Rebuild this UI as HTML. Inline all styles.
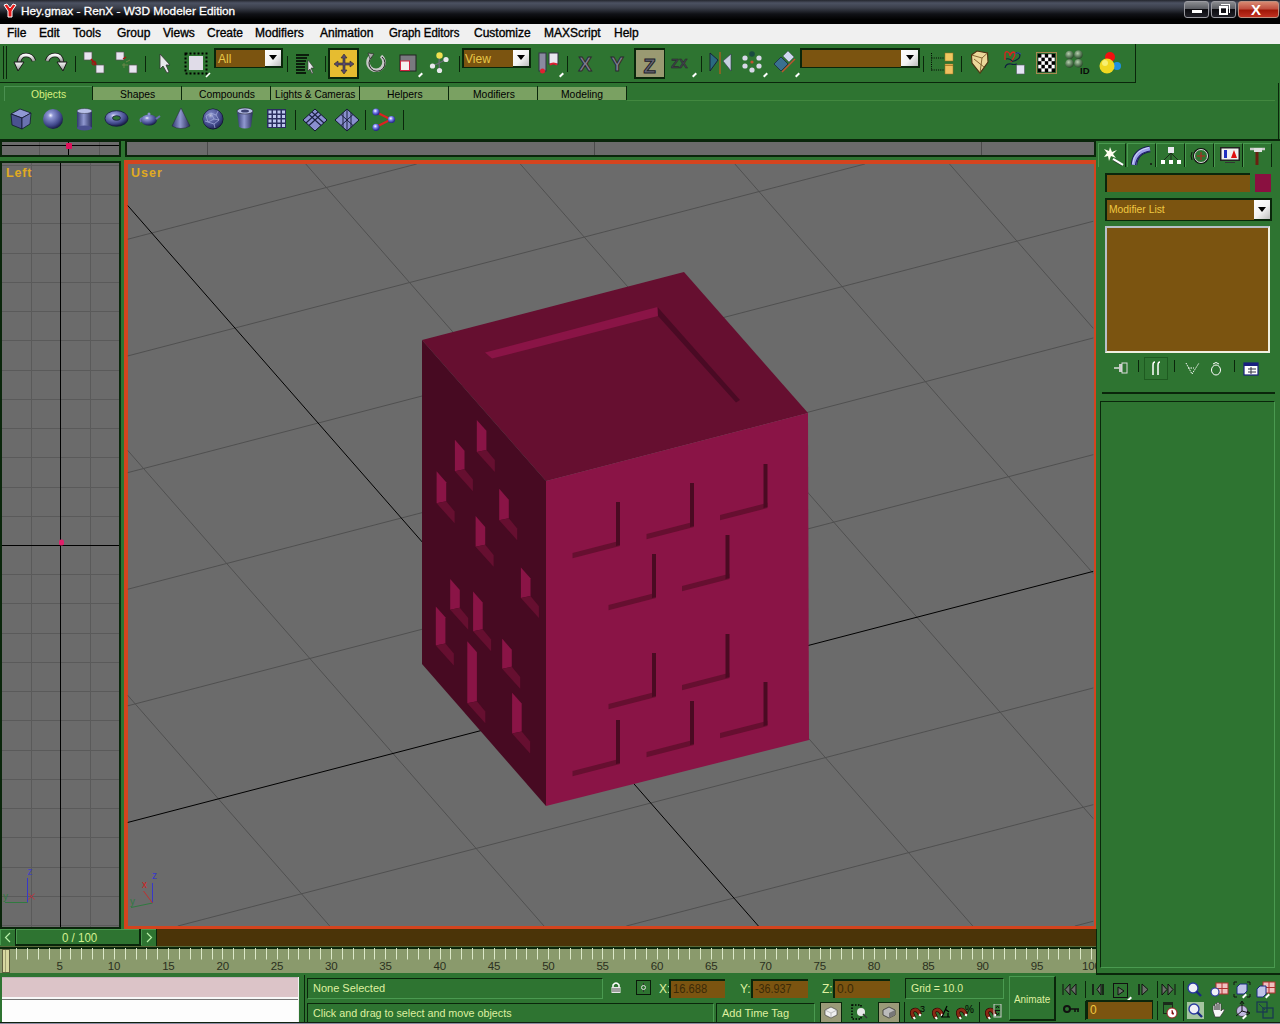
<!DOCTYPE html>
<html><head><meta charset="utf-8">
<style>
*{margin:0;padding:0;box-sizing:border-box}
html,body{width:1280px;height:1024px;overflow:hidden;background:#2e7431;font-family:"Liberation Sans",sans-serif}
div,svg,span{position:absolute}
.t{white-space:nowrap;transform-origin:0 0;line-height:1}
#title{left:0;top:0;width:1280px;height:24px;background:linear-gradient(#24262e 0px,#4c5262 3px,#3a3e4a 8px,#101116 14px,#000 20px,#000 24px)}
#menu{left:0;top:24px;width:1280px;height:20px;background:#f0f0f0}
.mi{top:26.5px;font-size:12px;color:#000;-webkit-text-stroke:.35px #000}
.dk{background:#0a260b}
.sep{width:1px;height:16px;top:56px;background:#0a260b}
.dd{height:20px;top:48px;background:#0a260b}
.dd i{position:absolute;left:2px;top:2px;bottom:2px;background:#7b5410}
.dd b{position:absolute;top:2px;width:16px;height:16px;background:linear-gradient(135deg,#fff 0%,#f4f4f4 60%,#c8c8c8 100%)}
.dd b:after{content:"";position:absolute;left:4px;top:6px;border-left:4px solid transparent;border-right:4px solid transparent;border-top:5px solid #000}
.fly{width:4px;height:2px;background:#fff;transform:rotate(-45deg)}
.tab{top:86px;height:14px;width:89px;background:#79a160;border-right:1px solid #0a260b}
.tabt{top:88px;font-size:12px;color:#000;transform:scaleX(.86)}
.yt{color:#e8c848}
.gt{color:#dff0a0}
</style></head><body>
<div id="title"></div>
<svg style="left:3px;top:3px" width="14" height="15" viewBox="0 0 14 15"><path d="M1 2 L4 1 L7 5 L10 1 L13 2 L9 8 L9 14 L5 14 L5 8 Z" fill="#e81818" stroke="#fff" stroke-width="1"/></svg>
<div class="t" style="left:21px;top:6px;font-size:11.8px;color:#fff;-webkit-text-stroke:.3px #fff">Hey.gmax - RenX - W3D Modeler Edition</div>
<!-- window buttons -->
<div style="left:1184px;top:1px;width:25px;height:17px;border:1px solid #9a9aa0;border-radius:3px;background:linear-gradient(#8a8c90 0%,#5a5c62 45%,#0c0c10 50%,#202028 100%)"></div>
<div style="left:1192px;top:10px;width:10px;height:3px;background:#fff"></div>
<div style="left:1211px;top:1px;width:25px;height:17px;border:1px solid #9a9aa0;border-radius:3px;background:linear-gradient(#8a8c90 0%,#5a5c62 45%,#0c0c10 50%,#202028 100%)"></div>
<div style="left:1219px;top:6px;width:9px;height:9px;border:2px solid #fff"></div>
<div style="left:1221px;top:4px;width:9px;height:9px;border-top:1px solid #fff;border-right:1px solid #fff"></div>
<div style="left:1238px;top:1px;width:41px;height:17px;border:1px solid #c09080;border-radius:3px;background:linear-gradient(#d88870 0%,#c05040 45%,#a01808 55%,#c03020 100%)"></div>
<div class="t" style="left:1251px;top:2px;font-size:15px;font-weight:bold;color:#fff">X</div>

<div id="menu"></div>
<div class="t mi" style="left:7px">File</div>
<div class="t mi" style="left:39px">Edit</div>
<div class="t mi" style="left:73px">Tools</div>
<div class="t mi" style="left:117px">Group</div>
<div class="t mi" style="left:163px">Views</div>
<div class="t mi" style="left:207px">Create</div>
<div class="t mi" style="left:255px">Modifiers</div>
<div class="t mi" style="left:320px">Animation</div>
<div class="t mi" style="left:389px;transform:scaleX(.95)">Graph Editors</div>
<div class="t mi" style="left:474px">Customize</div>
<div class="t mi" style="left:544px">MAXScript</div>
<div class="t mi" style="left:614px">Help</div>

<div style="left:3px;top:46px;width:1px;height:33px;background:#0a260b"></div>
<div style="left:6px;top:46px;width:1px;height:33px;background:#0a260b"></div>
<svg style="left:13px;top:52px" width="24" height="21" viewBox="0 0 24 21"><defs><linearGradient id="gU" x1="0" y1="0" x2="0" y2="1"><stop offset="0" stop-color="#fafafa"/><stop offset=".7" stop-color="#b0b0b0"/><stop offset="1" stop-color="#707070"/></linearGradient></defs><path d="M6 10 Q7 3 13 3 Q19 3 21 9" fill="none" stroke="#1a1a1a" stroke-width="4.5"/><path d="M6 10 Q7 3 13 3 Q19 3 21 9" fill="none" stroke="url(#gU)" stroke-width="2.8"/><path d="M1 10 L11 10 L5 19 Z" fill="url(#gU)" stroke="#1a1a1a" stroke-width="1"/></svg>
<svg style="left:44px;top:52px" width="24" height="21" viewBox="0 0 24 21"><path d="M18 10 Q17 3 11 3 Q5 3 3 9" fill="none" stroke="#1a1a1a" stroke-width="4.5"/><path d="M18 10 Q17 3 11 3 Q5 3 3 9" fill="none" stroke="url(#gU)" stroke-width="2.8"/><path d="M23 10 L13 10 L19 19 Z" fill="url(#gU)" stroke="#1a1a1a" stroke-width="1"/></svg>
<div style="left:75px;top:56px;width:1px;height:16px;background:#0a260b"></div>
<svg style="left:82px;top:51px" width="24" height="24" viewBox="0 0 24 24"><rect x="2" y="1" width="8" height="8" fill="#e8e4f0" stroke="#555" stroke-width=".7"/><path d="M9 8 L16 16" stroke="#b01010" stroke-width="1.6"/><circle cx="12" cy="12" r="2" fill="none" stroke="#a01010" stroke-width="1"/><rect x="14" y="14" width="8" height="8" fill="#e8e4f0" stroke="#555" stroke-width=".7"/></svg>
<svg style="left:114px;top:51px" width="26" height="24" viewBox="0 0 26 24"><rect x="2" y="1" width="8" height="8" fill="#e8e4f0" stroke="#555" stroke-width=".7"/><path d="M9 8 L12 6" stroke="#b01010" stroke-width="1.4"/><path d="M8 14 L14 14 M10 12 L10 17 M12 11 L16 9" stroke="#7a8a50" stroke-width=".8"/><rect x="15" y="14" width="8" height="8" fill="#e8e4f0" stroke="#555" stroke-width=".7"/></svg>
<div style="left:145px;top:56px;width:1px;height:16px;background:#0a260b"></div>
<svg style="left:158px;top:53px" width="14" height="22" viewBox="0 0 14 22"><path d="M2 1 L2 16 L5 13 L9 20 L11 19 L8 12 L12 12 Z" fill="#e8e8ec" stroke="#333" stroke-width=".8"/></svg>
<svg style="left:184px;top:52px" width="28" height="26" viewBox="0 0 28 26"><rect x="1.5" y="1.5" width="21" height="20" fill="none" stroke="#000" stroke-width="2" stroke-dasharray="2 2"/><rect x="5" y="4" width="14" height="14" fill="#e0dce8"/><path d="M22 25 L26 21" stroke="#fff" stroke-width="1.6"/></svg>
<div style="left:214px;top:48px;width:69px;height:20px;background:#0a260b"></div><div style="left:216px;top:50px;width:49px;height:17px;background:#7b5410"></div><div style="left:265px;top:50px;width:16px;height:16px;background:linear-gradient(135deg,#fff 0%,#f2f2f2 55%,#bdbdbd 100%)"></div><svg style="left:268.0px;top:55.0px" width="10" height="6" viewBox="0 0 10 6"><path d="M1 0 L9 0 L5 5 Z" fill="#000"/></svg><div class="t" style="left:218px;top:53.0px;font-size:12px;color:#e8c848">All</div>
<div style="left:287px;top:56px;width:1px;height:16px;background:#0a260b"></div>
<svg style="left:295px;top:53px" width="20" height="22" viewBox="0 0 20 22"><path d="M1 2 H14 M1 5 H12 M1 8 H11 M1 11 H10 M1 14 H10 M1 17 H10 M1 20 H11" stroke="#000" stroke-width="1.5"/><path d="M13 7 L13 18 L15 16 L17 21 L18 20 L16 15 L19 15 Z" fill="#e8e8ec" stroke="#333" stroke-width=".6"/></svg>
<div style="left:325px;top:56px;width:1px;height:16px;background:#0a260b"></div>
<div style="left:328px;top:48px;width:31px;height:31px;background:#0a260b"></div>
<div style="left:330px;top:50px;width:27px;height:27px;background:#e6bc30"></div>
<svg style="left:333px;top:53px" width="22" height="22" viewBox="0 0 22 22"><path d="M11 1 L14 5 L12 5 L12 10 L17 10 L17 8 L21 11 L17 14 L17 12 L12 12 L12 17 L14 17 L11 21 L8 17 L10 17 L10 12 L5 12 L5 14 L1 11 L5 8 L5 10 L10 10 L10 5 L8 5 Z" fill="#5a4a6a" stroke="#2a2a2a" stroke-width=".6"/></svg>
<svg style="left:365px;top:52px" width="22" height="22" viewBox="0 0 22 22"><path d="M6 4 A8 8 0 1 0 16 4" fill="none" stroke="#c8c8c8" stroke-width="3.5"/><path d="M6 4 A8 8 0 1 0 16 4" fill="none" stroke="#222" stroke-width="1" transform="translate(1,1)"/><path d="M3 1 L9 2 L5 7 Z" fill="#aaa" stroke="#222" stroke-width=".6"/></svg>
<svg style="left:399px;top:54px" width="18" height="18" viewBox="0 0 18 18"><rect x="1" y="1" width="16" height="16" fill="#7a7a80" stroke="#222" stroke-width="1"/><rect x="1.5" y="7" width="9" height="9.5" fill="#f4eef0" stroke="#d02040" stroke-width="1"/></svg>
<div style="left:418px;top:74px;width:5px;height:2px;background:#fff;transform:rotate(-45deg)"></div>
<svg style="left:429px;top:50px" width="20" height="24" viewBox="0 0 20 24"><path d="M10.5 5.5 L10 13 L3.5 16 M10 13 L17 9.5 M10 13 L10.5 20.5" stroke="#6a6a78" stroke-width="1.2" fill="none"/><circle cx="10.5" cy="5.5" r="3.2" fill="#f0e050"/><circle cx="17" cy="9.5" r="2.6" fill="#e8e8ec"/><circle cx="3.5" cy="16" r="2.6" fill="#e8e8ec"/><circle cx="10.5" cy="20.5" r="2.6" fill="#e8e8ec"/></svg>
<div style="left:459px;top:56px;width:1px;height:16px;background:#0a260b"></div>
<div style="left:462px;top:48px;width:69px;height:20px;background:#0a260b"></div><div style="left:464px;top:50px;width:49px;height:17px;background:#7b5410"></div><div style="left:513px;top:50px;width:16px;height:16px;background:linear-gradient(135deg,#fff 0%,#f2f2f2 55%,#bdbdbd 100%)"></div><svg style="left:516.0px;top:55.0px" width="10" height="6" viewBox="0 0 10 6"><path d="M1 0 L9 0 L5 5 Z" fill="#000"/></svg><div class="t" style="left:465px;top:53.0px;font-size:12px;color:#e8c848">View</div>
<svg style="left:537px;top:52px" width="24" height="22" viewBox="0 0 24 22"><rect x="2" y="1" width="7" height="18" fill="#8a8aa0" stroke="#334" stroke-width="1"/><circle cx="5.5" cy="19" r="2.5" fill="#e02030"/><rect x="12" y="1" width="9" height="11" fill="#e8e8f0" stroke="#334" stroke-width="1"/><path d="M13 13 A4 3 0 0 1 20 13" fill="none" stroke="#e02030" stroke-width="2"/></svg>
<div style="left:559px;top:74px;width:5px;height:2px;background:#fff;transform:rotate(-45deg)"></div>
<div style="left:567px;top:56px;width:1px;height:16px;background:#0a260b"></div>
<div class="t" style="left:578.5px;top:54px;font-size:20px;color:#808090;font-weight:bold;-webkit-text-stroke:1px #2a2a30">X</div>
<div class="t" style="left:610.5px;top:54px;font-size:20px;color:#808090;font-weight:bold;-webkit-text-stroke:1px #2a2a30">Y</div>
<div style="left:634px;top:48px;width:31px;height:31px;background:#0a260b"></div>
<div style="left:636px;top:50px;width:28px;height:27px;background:#9a9a72"></div>
<div class="t" style="left:643.5px;top:55.5px;font-size:20px;color:#6a6a78;font-weight:bold;-webkit-text-stroke:1px #202028">Z</div>
<div class="t" style="left:671px;top:57px;font-size:13px;color:#40404c;font-weight:bold;-webkit-text-stroke:.4px #222">ZX</div>
<div style="left:692px;top:74px;width:5px;height:2px;background:#fff;transform:rotate(-45deg)"></div>
<div style="left:701px;top:56px;width:1px;height:16px;background:#0a260b"></div>
<svg style="left:709px;top:52px" width="24" height="22" viewBox="0 0 24 22"><path d="M1 1 L9 8 L1 19 Z" fill="#2a6a80" stroke="#113" stroke-width=".8"/><path d="M11 0 L11 22" stroke="#a06020" stroke-width="1.5"/><path d="M22 2 L14 9 L22 19 Z" fill="#c8d0e0" stroke="#335" stroke-width=".6"/></svg>
<svg style="left:740px;top:50px" width="24" height="25" viewBox="0 0 24 25"><circle cx="12" cy="4" r="2.8" fill="#1a4a40"/><circle cx="5" cy="8" r="2.6" fill="#d8d8e8"/><circle cx="19" cy="8" r="2.6" fill="#d8d8e8"/><circle cx="5" cy="16" r="2.6" fill="#d8d8e8"/><circle cx="19" cy="16" r="2.6" fill="#d8d8e8"/><circle cx="12" cy="20" r="2.6" fill="#d8d8e8"/><circle cx="12" cy="12" r="1.6" fill="#c05030"/></svg>
<div style="left:763px;top:74px;width:5px;height:2px;background:#fff;transform:rotate(-45deg)"></div>
<svg style="left:773px;top:51px" width="24" height="22" viewBox="0 0 24 22"><path d="M1 13 L8 6 L15 13 L8 20 Z" fill="#3a7090" stroke="#113" stroke-width=".6"/><path d="M10 5 L15 0 L21 6 L16 11 Z" fill="#d0d8f0" stroke="#556" stroke-width=".5"/><path d="M9 21 L22 8" stroke="#c05030" stroke-width="1.5"/></svg>
<div style="left:795px;top:74px;width:5px;height:2px;background:#fff;transform:rotate(-45deg)"></div>
<div style="left:800px;top:48px;width:120px;height:20px;background:#0a260b"></div><div style="left:802px;top:50px;width:99px;height:17px;background:#7b5410"></div><div style="left:901px;top:50px;width:17px;height:16px;background:linear-gradient(135deg,#fff 0%,#f2f2f2 55%,#bdbdbd 100%)"></div><svg style="left:904.5px;top:55.0px" width="10" height="6" viewBox="0 0 10 6"><path d="M1 0 L9 0 L5 5 Z" fill="#000"/></svg>
<div style="left:923px;top:56px;width:1px;height:16px;background:#0a260b"></div>
<svg style="left:930px;top:52px" width="24" height="24" viewBox="0 0 24 24"><path d="M1.5 1 V19 M1.5 6 H14 M1.5 18 H14" stroke="#000" stroke-width="1" stroke-dasharray="1 1.2" fill="none"/><rect x="15" y="1" width="8" height="8" fill="#f0c860" stroke="#a07020" stroke-width=".5"/><rect x="15" y="12" width="8" height="10" fill="#f0c060" stroke="#a07020" stroke-width=".5"/><path d="M15 13.5 H23" stroke="#a07020" stroke-width=".8"/></svg>
<div style="left:961px;top:56px;width:1px;height:16px;background:#0a260b"></div>
<svg style="left:970px;top:50px" width="21" height="26" viewBox="0 0 21 26"><path d="M1.5 5 L7 1 L17.5 3 L18 12 L10 23 L2 13 Z" fill="#ecd89a" stroke="#4a3010" stroke-width="1.1"/><path d="M1.5 5 L12 8 L17.5 3 M12 8 L10 23 M4 9 L14 17" fill="none" stroke="#6a4a18" stroke-width=".8"/></svg>
<svg style="left:1002px;top:50px" width="26" height="26" viewBox="0 0 26 26"><path d="M3 10 V4 Q3 1 6 2 Q8 3 8 6 Q9 2 12 2 Q14 3 12 7 L9 12" fill="none" stroke="#e02020" stroke-width="1.3"/><path d="M4 9 Q8 8 10 11 Q12 12 16 9 Q18 8 18 5 Q17 2 14 3" fill="none" stroke="#102040" stroke-width="1.2"/><path d="M3 18 Q4 13 9 14 Q12 15 15 14" fill="none" stroke="#102040" stroke-width="1.2"/><path d="M13 4 Q16 1 19 4" fill="none" stroke="#3050a0" stroke-width="1"/><rect x="14.5" y="15" width="8" height="9" fill="#e4e4f4" stroke="#556" stroke-width=".6"/></svg>
<svg style="left:1036px;top:52px" width="21" height="22" viewBox="0 0 21 22"><rect x=".5" y=".5" width="20" height="21" fill="none" stroke="#a88850" stroke-width="1"/><rect x="2" y="2" width="17" height="18" fill="#fff" stroke="#222" stroke-width=".6"/><rect x="2.00" y="2.00" width="3.4" height="3.6" fill="#000"/><rect x="2.00" y="9.20" width="3.4" height="3.6" fill="#000"/><rect x="2.00" y="16.40" width="3.4" height="3.6" fill="#000"/><rect x="5.40" y="5.60" width="3.4" height="3.6" fill="#000"/><rect x="5.40" y="12.80" width="3.4" height="3.6" fill="#000"/><rect x="8.80" y="2.00" width="3.4" height="3.6" fill="#000"/><rect x="8.80" y="9.20" width="3.4" height="3.6" fill="#000"/><rect x="8.80" y="16.40" width="3.4" height="3.6" fill="#000"/><rect x="12.20" y="5.60" width="3.4" height="3.6" fill="#000"/><rect x="12.20" y="12.80" width="3.4" height="3.6" fill="#000"/><rect x="15.60" y="2.00" width="3.4" height="3.6" fill="#000"/><rect x="15.60" y="9.20" width="3.4" height="3.6" fill="#000"/><rect x="15.60" y="16.40" width="3.4" height="3.6" fill="#000"/></svg>
<svg style="left:1064px;top:50px" width="28" height="26" viewBox="0 0 28 26"><defs><radialGradient id="gs" cx=".4" cy=".35" r=".65"><stop offset="0" stop-color="#b8d0b0"/><stop offset=".5" stop-color="#6a8a68"/><stop offset="1" stop-color="#2a4a2a"/></radialGradient></defs><circle cx="5.5" cy="5" r="4.3" fill="url(#gs)"/><circle cx="14.5" cy="4.6" r="4.3" fill="url(#gs)"/><circle cx="5.5" cy="13.5" r="4.3" fill="url(#gs)"/><circle cx="14.5" cy="13.3" r="4.3" fill="url(#gs)"/><text x="16" y="24" font-family="Liberation Sans" font-weight="bold" font-size="9.5" fill="#0a0a0a">ID</text></svg>
<svg style="left:1098px;top:51px" width="25" height="24" viewBox="0 0 25 24"><circle cx="12" cy="6" r="5" fill="#f01010"/><circle cx="19" cy="15" r="4" fill="#2090e0"/><circle cx="9" cy="15" r="7.5" fill="#f0d820"/><circle cx="7" cy="12" r="3" fill="#f8f070"/></svg>

<!-- dark separator lines -->
<div class="dk" style="left:0;top:82px;width:1136px;height:1px"></div>
<div class="dk" style="left:1135px;top:44px;width:1px;height:39px"></div>
<div class="dk" style="left:0;top:139px;width:1280px;height:2px"></div>
<div style="left:627px;top:100px;width:648px;height:1px;background:#42883f"></div>
<div class="dk" style="left:1278px;top:83px;width:1px;height:57px"></div>

<div style="left:4px;top:86px;width:88px;height:15px;border-top:1px solid #4a9050;border-left:1px solid #4a9050"></div>
<div style="left:92px;top:86px;width:1px;height:14px;background:#0a260b"></div>
<div class="t" style="left:30.5px;top:88.5px;font-size:11.5px;color:#d8f080;transform:scaleX(.9)">Objects</div>
<div style="left:93px;top:87px;width:88px;height:13px;background:#7aa162"></div>
<div style="left:181px;top:86px;width:1px;height:14px;background:#0a260b"></div>
<div class="t" style="left:120px;top:88.5px;font-size:11.5px;color:#000;transform:scaleX(0.9)">Shapes</div>
<div style="left:182px;top:87px;width:88px;height:13px;background:#7aa162"></div>
<div style="left:270px;top:86px;width:1px;height:14px;background:#0a260b"></div>
<div class="t" style="left:198.5px;top:88.5px;font-size:11.5px;color:#000;transform:scaleX(0.9)">Compounds</div>
<div style="left:271px;top:87px;width:88px;height:13px;background:#7aa162"></div>
<div style="left:359px;top:86px;width:1px;height:14px;background:#0a260b"></div>
<div class="t" style="left:275px;top:88.5px;font-size:11.5px;color:#000;transform:scaleX(0.88)">Lights &amp; Cameras</div>
<div style="left:360px;top:87px;width:88px;height:13px;background:#7aa162"></div>
<div style="left:448px;top:86px;width:1px;height:14px;background:#0a260b"></div>
<div class="t" style="left:386.5px;top:88.5px;font-size:11.5px;color:#000;transform:scaleX(0.9)">Helpers</div>
<div style="left:449px;top:87px;width:88px;height:13px;background:#7aa162"></div>
<div style="left:537px;top:86px;width:1px;height:14px;background:#0a260b"></div>
<div class="t" style="left:472.5px;top:88.5px;font-size:11.5px;color:#000;transform:scaleX(0.9)">Modifiers</div>
<div style="left:538px;top:87px;width:88px;height:13px;background:#7aa162"></div>
<div style="left:626px;top:86px;width:1px;height:14px;background:#0a260b"></div>
<div class="t" style="left:561px;top:88.5px;font-size:11.5px;color:#000;transform:scaleX(0.9)">Modeling</div>
<svg style="left:0px;top:0px" width="1" height="1" viewBox="0 0 1 1"><defs><radialGradient id="sph" cx=".38" cy=".32" r=".72"><stop offset="0" stop-color="#f4f4ff"/><stop offset=".18" stop-color="#8e96d4"/><stop offset=".7" stop-color="#40488a"/><stop offset="1" stop-color="#12163a"/></radialGradient><linearGradient id="cyl" x1="0" x2="1"><stop offset="0" stop-color="#30386e"/><stop offset=".45" stop-color="#9098d0"/><stop offset="1" stop-color="#262c5a"/></linearGradient></defs></svg>
<svg style="left:9px;top:107px" width="24" height="24" viewBox="0 0 24 24"><path d="M2 7 L11 2 L22 6 L13 11 Z" fill="#9098d4" stroke="#111830" stroke-width=".8"/><path d="M2 7 L13 11 L13 22 L3 18 Z" fill="#4a5290" stroke="#111830" stroke-width=".8"/><path d="M13 11 L22 6 L21 17 L13 22 Z" fill="#6a72b0" stroke="#111830" stroke-width=".8"/></svg>
<svg style="left:42px;top:108px" width="22" height="22" viewBox="0 0 22 22"><circle cx="11" cy="11" r="10" fill="url(#sph)"/></svg>
<svg style="left:75px;top:107px" width="19" height="24" viewBox="0 0 19 24"><rect x="2" y="4" width="15" height="17" fill="url(#cyl)"/><ellipse cx="9.5" cy="21" rx="7.5" ry="2.5" fill="#4a5090"/><ellipse cx="9.5" cy="4" rx="7.5" ry="2.5" fill="#b8c0e8" stroke="#334" stroke-width=".5"/></svg>
<svg style="left:104px;top:110px" width="25" height="17" viewBox="0 0 25 17"><ellipse cx="12.5" cy="8.5" rx="11.5" ry="7.8" fill="url(#sph)" stroke="#161a40" stroke-width=".8"/><ellipse cx="12.5" cy="8" rx="4" ry="2.3" fill="#2e7431" stroke="#161a40" stroke-width=".8"/></svg>
<svg style="left:138px;top:111px" width="23" height="15" viewBox="0 0 23 15"><ellipse cx="11" cy="9" rx="8" ry="5.5" fill="url(#sph)"/><path d="M18 8 L22 5" stroke="#6a72b0" stroke-width="2"/><path d="M4 7 Q1 8 3 11" stroke="#6a72b0" stroke-width="1.5" fill="none"/><circle cx="11" cy="3" r="1.5" fill="#8a92d0"/></svg>
<svg style="left:170px;top:107px" width="22" height="24" viewBox="0 0 22 24"><path d="M11 1 L2 19 Q11 24 20 19 Z" fill="url(#cyl)" stroke="#223" stroke-width=".5"/></svg>
<svg style="left:202px;top:108px" width="22" height="22" viewBox="0 0 22 22"><circle cx="11" cy="11" r="10" fill="#3a4280" stroke="#10142e" stroke-width="1"/><circle cx="11" cy="11" r="10" fill="url(#sph)" opacity=".7"/><path d="M4 8 L9 5 L14 7 L17 12 L12 16 L6 14 Z M9 5 L12 11 L17 12 M12 11 L6 14 M3 13 L6 14 M14 7 L16 3 M12 16 L13 20" stroke="#a8b0e0" stroke-width=".7" fill="none"/></svg>
<svg style="left:235px;top:107px" width="20" height="24" viewBox="0 0 20 24"><path d="M2 4 L4 20 Q10 23 16 20 L18 4 Z" fill="url(#cyl)"/><ellipse cx="10" cy="4" rx="8" ry="3" fill="#b8c0e8" stroke="#223" stroke-width=".6"/><ellipse cx="10" cy="4" rx="4" ry="1.6" fill="#3a4070"/></svg>
<svg style="left:266px;top:108px" width="21" height="21" viewBox="0 0 21 21"><rect x="1" y="1" width="19" height="19" fill="#2a2e60"/><rect x="2.5" y="2.5" width="3" height="3" fill="#c0c8f0"/><rect x="2.5" y="7.0" width="3" height="3" fill="#c0c8f0"/><rect x="2.5" y="11.5" width="3" height="3" fill="#c0c8f0"/><rect x="2.5" y="16.0" width="3" height="3" fill="#c0c8f0"/><rect x="7.0" y="2.5" width="3" height="3" fill="#c0c8f0"/><rect x="7.0" y="7.0" width="3" height="3" fill="#c0c8f0"/><rect x="7.0" y="11.5" width="3" height="3" fill="#c0c8f0"/><rect x="7.0" y="16.0" width="3" height="3" fill="#c0c8f0"/><rect x="11.5" y="2.5" width="3" height="3" fill="#c0c8f0"/><rect x="11.5" y="7.0" width="3" height="3" fill="#c0c8f0"/><rect x="11.5" y="11.5" width="3" height="3" fill="#c0c8f0"/><rect x="11.5" y="16.0" width="3" height="3" fill="#c0c8f0"/><rect x="16.0" y="2.5" width="3" height="3" fill="#c0c8f0"/><rect x="16.0" y="7.0" width="3" height="3" fill="#c0c8f0"/><rect x="16.0" y="11.5" width="3" height="3" fill="#c0c8f0"/><rect x="16.0" y="16.0" width="3" height="3" fill="#c0c8f0"/></svg>
<div style="left:295px;top:110px;width:1px;height:20px;background:#0a260b"></div>
<svg style="left:302px;top:108px" width="26" height="24" viewBox="0 0 26 24"><path d="M13 1 L25 12 L13 23 L1 12 Z" fill="#8a90d0" stroke="#111830" stroke-width="1"/><path d="M7 6.5 L19 17.5 M10 4 L22 15 M19 6.5 L7 17.5 M16 4 L4 15" stroke="#1a2040" stroke-width="1.1"/></svg>
<svg style="left:334px;top:108px" width="26" height="24" viewBox="0 0 26 24"><path d="M13 1 L25 12 L13 23 L1 12 Z" fill="#8a90d0" stroke="#111830" stroke-width="1"/><path d="M13 1 V23 M9 4.5 V19.5 M17 4.5 V19.5 M7 6.5 L19 17.5 M19 6.5 L7 17.5" stroke="#1a2040" stroke-width="1"/></svg>
<div style="left:365px;top:110px;width:1px;height:20px;background:#0a260b"></div>
<svg style="left:369px;top:105px" width="28" height="28" viewBox="0 0 28 28"><path d="M7 7 L22 14.5 L7 22" stroke="#e02020" stroke-width="2" fill="none"/><defs><radialGradient id="bb" cx=".4" cy=".35" r=".6"><stop offset="0" stop-color="#fff"/><stop offset=".45" stop-color="#7a80f0"/><stop offset="1" stop-color="#2a2a90"/></radialGradient></defs><circle cx="7" cy="7" r="3.6" fill="url(#bb)"/><circle cx="22.5" cy="14.5" r="3.6" fill="url(#bb)"/><circle cx="7" cy="22.3" r="3.6" fill="url(#bb)"/></svg>
<div style="left:403px;top:110px;width:1px;height:20px;background:#0a260b"></div>

<!-- viewport header strips -->
<div class="dk" style="left:0;top:141px;width:121px;height:16px"></div>
<div style="left:2px;top:142px;width:117px;height:13px;background:#6b6b6b"></div>
<div style="left:39px;top:142px;width:1px;height:13px;background:#585858"></div>
<div style="left:99px;top:142px;width:1px;height:13px;background:#585858"></div>
<div style="left:2px;top:145px;width:117px;height:1px;background:#000"></div>
<div style="left:68px;top:142px;width:1px;height:13px;background:#000"></div>
<div style="left:66px;top:143px;width:6px;height:6px;background:#e0105a;border-radius:1px"></div>
<div class="dk" style="left:125px;top:141px;width:971px;height:16px"></div>
<div style="left:127px;top:142px;width:967px;height:13px;background:#6b6b6b"></div>
<div style="left:207px;top:142px;width:1px;height:13px;background:#4a4a4a"></div>
<div style="left:594px;top:142px;width:1px;height:13px;background:#4a4a4a"></div>
<div style="left:981px;top:142px;width:1px;height:13px;background:#4a4a4a"></div>

<!-- left viewport -->
<div class="dk" style="left:0;top:161px;width:121px;height:768px"></div>
<div style="left:2px;top:163px;width:117px;height:764px;background:#6b6b6b"></div>
<svg style="left:0;top:0" width="1280" height="1024">
<defs><clipPath id="lvc"><rect x="2" y="163" width="117" height="764"/></clipPath>
<clipPath id="uvc"><rect x="127.5" y="164" width="966" height="762"/></clipPath></defs>
<g clip-path="url(#lvc)">
<line x1="31.5" y1="163" x2="31.5" y2="927" stroke="#5a5a5a" stroke-width="1"/>
<line x1="90.5" y1="163" x2="90.5" y2="927" stroke="#5a5a5a" stroke-width="1"/>
<line x1="2" y1="165.5" x2="119" y2="165.5" stroke="#5a5a5a" stroke-width="1"/>
<line x1="2" y1="194.5" x2="119" y2="194.5" stroke="#5a5a5a" stroke-width="1"/>
<line x1="2" y1="223.5" x2="119" y2="223.5" stroke="#5a5a5a" stroke-width="1"/>
<line x1="2" y1="253.5" x2="119" y2="253.5" stroke="#5a5a5a" stroke-width="1"/>
<line x1="2" y1="282.5" x2="119" y2="282.5" stroke="#5a5a5a" stroke-width="1"/>
<line x1="2" y1="311.5" x2="119" y2="311.5" stroke="#5a5a5a" stroke-width="1"/>
<line x1="2" y1="340.5" x2="119" y2="340.5" stroke="#5a5a5a" stroke-width="1"/>
<line x1="2" y1="370.5" x2="119" y2="370.5" stroke="#5a5a5a" stroke-width="1"/>
<line x1="2" y1="399.5" x2="119" y2="399.5" stroke="#5a5a5a" stroke-width="1"/>
<line x1="2" y1="428.5" x2="119" y2="428.5" stroke="#5a5a5a" stroke-width="1"/>
<line x1="2" y1="457.5" x2="119" y2="457.5" stroke="#5a5a5a" stroke-width="1"/>
<line x1="2" y1="487.5" x2="119" y2="487.5" stroke="#5a5a5a" stroke-width="1"/>
<line x1="2" y1="516.5" x2="119" y2="516.5" stroke="#5a5a5a" stroke-width="1"/>
<line x1="2" y1="574.5" x2="119" y2="574.5" stroke="#5a5a5a" stroke-width="1"/>
<line x1="2" y1="603.5" x2="119" y2="603.5" stroke="#5a5a5a" stroke-width="1"/>
<line x1="2" y1="633.5" x2="119" y2="633.5" stroke="#5a5a5a" stroke-width="1"/>
<line x1="2" y1="662.5" x2="119" y2="662.5" stroke="#5a5a5a" stroke-width="1"/>
<line x1="2" y1="691.5" x2="119" y2="691.5" stroke="#5a5a5a" stroke-width="1"/>
<line x1="2" y1="720.5" x2="119" y2="720.5" stroke="#5a5a5a" stroke-width="1"/>
<line x1="2" y1="750.5" x2="119" y2="750.5" stroke="#5a5a5a" stroke-width="1"/>
<line x1="2" y1="779.5" x2="119" y2="779.5" stroke="#5a5a5a" stroke-width="1"/>
<line x1="2" y1="808.5" x2="119" y2="808.5" stroke="#5a5a5a" stroke-width="1"/>
<line x1="2" y1="837.5" x2="119" y2="837.5" stroke="#5a5a5a" stroke-width="1"/>
<line x1="2" y1="867.5" x2="119" y2="867.5" stroke="#5a5a5a" stroke-width="1"/>
<line x1="2" y1="896.5" x2="119" y2="896.5" stroke="#5a5a5a" stroke-width="1"/>
<line x1="2" y1="925.5" x2="119" y2="925.5" stroke="#5a5a5a" stroke-width="1"/>
<line x1="60.5" y1="163" x2="60.5" y2="927" stroke="#000" stroke-width="1"/>
<line x1="2" y1="545.5" x2="119" y2="545.5" stroke="#000" stroke-width="1"/>
<rect x="59" y="539.5" width="5" height="6" rx="2" fill="#e0206a"/>
</g>
</svg>
<div class="t" style="left:6px;top:167px;font-size:12.5px;font-weight:bold;letter-spacing:.8px;color:#e0aa22">Left</div>

<!-- user viewport -->
<div style="left:124px;top:160px;width:972px;height:769px;background:#d4441e"></div>
<div style="left:128px;top:164px;width:965.5px;height:762px;background:#6b6b6b"></div>
<svg style="left:0;top:0" width="1280" height="1024">
<g clip-path="url(#uvc)">
<line x1="127.5" y1="239.3" x2="416.7" y2="164.0" stroke="#505050" stroke-width="1"/>
<line x1="127.5" y1="356.0" x2="864.9" y2="164.0" stroke="#505050" stroke-width="1"/>
<line x1="127.5" y1="472.7" x2="1093.5" y2="221.2" stroke="#505050" stroke-width="1"/>
<line x1="127.5" y1="589.3" x2="1093.5" y2="337.9" stroke="#505050" stroke-width="1"/>
<line x1="127.5" y1="695.1" x2="329.7" y2="926.0" stroke="#505050" stroke-width="1"/>
<line x1="127.5" y1="705.9" x2="1093.5" y2="454.6" stroke="#505050" stroke-width="1"/>
<line x1="127.5" y1="450.2" x2="544.0" y2="926.0" stroke="#505050" stroke-width="1"/>
<line x1="177.8" y1="926.0" x2="1093.5" y2="687.9" stroke="#505050" stroke-width="1"/>
<line x1="305.8" y1="164.0" x2="972.8" y2="926.0" stroke="#505050" stroke-width="1"/>
<line x1="626.3" y1="926.0" x2="1093.5" y2="804.6" stroke="#505050" stroke-width="1"/>
<line x1="520.3" y1="164.0" x2="1093.5" y2="818.9" stroke="#505050" stroke-width="1"/>
<line x1="1074.9" y1="926.0" x2="1093.5" y2="921.2" stroke="#505050" stroke-width="1"/>
<line x1="734.9" y1="164.0" x2="1093.5" y2="573.8" stroke="#505050" stroke-width="1"/>
<line x1="949.5" y1="164.0" x2="1093.5" y2="328.6" stroke="#505050" stroke-width="1"/>
<line x1="127.5" y1="822.5" x2="1093.5" y2="571.3" stroke="#000" stroke-width="1"/>
<line x1="127.5" y1="205.3" x2="758.4" y2="926.0" stroke="#000" stroke-width="1"/>
<polygon points="422.0,340.0 684.0,272.0 808.0,413.0 546.0,481.0" fill="#660f30"/>
<polygon points="422.0,340.0 546.0,481.0 546.0,806.0 422.0,664.0" fill="#470a22"/>
<polygon points="546.0,481.0 808.0,413.0 809.0,740.0 546.0,806.0" fill="#8a1446"/>
<polygon points="485.0,352.5 657.5,307.0 660.0,315.5 492.0,358.5" fill="#8a1446"/>
<polygon points="657.5,307.0 740.0,400.0 736.0,402.5 658.0,316.0" fill="#4a0a24"/>
<polygon points="572.5,553.1 620.0,540.8 620.0,546.0 572.5,558.3" fill="#660f30"/><polygon points="616.0,502.0 620.0,502.0 620.0,545.0 616.0,546.0" fill="#4a0a22"/>
<polygon points="646.5,534.1 694.0,521.8 694.0,527.0 646.5,539.3" fill="#660f30"/><polygon points="690.0,483.0 694.0,483.0 694.0,526.0 690.0,527.0" fill="#4a0a22"/>
<polygon points="720.0,515.1 767.5,502.8 767.5,508.0 720.0,520.3" fill="#660f30"/><polygon points="763.5,464.0 767.5,464.0 767.5,507.0 763.5,508.0" fill="#4a0a22"/>
<polygon points="608.5,605.1 656.0,592.8 656.0,598.0 608.5,610.3" fill="#660f30"/><polygon points="652.0,554.0 656.0,554.0 656.0,597.0 652.0,598.0" fill="#4a0a22"/>
<polygon points="682.0,586.1 729.5,573.8 729.5,579.0 682.0,591.3" fill="#660f30"/><polygon points="725.5,535.0 729.5,535.0 729.5,578.0 725.5,579.0" fill="#4a0a22"/>
<polygon points="608.5,704.1 656.0,691.8 656.0,697.0 608.5,709.3" fill="#660f30"/><polygon points="652.0,653.0 656.0,653.0 656.0,696.0 652.0,697.0" fill="#4a0a22"/>
<polygon points="682.0,685.1 729.5,672.8 729.5,678.0 682.0,690.3" fill="#660f30"/><polygon points="725.5,634.0 729.5,634.0 729.5,677.0 725.5,678.0" fill="#4a0a22"/>
<polygon points="572.5,771.1 620.0,758.8 620.0,764.0 572.5,776.3" fill="#660f30"/><polygon points="616.0,720.0 620.0,720.0 620.0,763.0 616.0,764.0" fill="#4a0a22"/>
<polygon points="646.5,752.1 694.0,739.8 694.0,745.0 646.5,757.3" fill="#660f30"/><polygon points="690.0,701.0 694.0,701.0 694.0,744.0 690.0,745.0" fill="#4a0a22"/>
<polygon points="720.0,733.1 767.5,720.8 767.5,726.0 720.0,738.3" fill="#660f30"/><polygon points="763.5,682.0 767.5,682.0 767.5,725.0 763.5,726.0" fill="#4a0a22"/>
<polygon points="476.8,419.9 486.4,430.8 486.4,449.9 476.8,451.9" fill="#8a1446"/><polygon points="476.8,451.9 486.4,449.9 494.8,460.1 494.8,471.9" fill="#660f30"/>
<polygon points="454.9,439.8 464.5,450.7 464.5,469.3 454.9,471.3" fill="#8a1446"/><polygon points="454.9,471.3 464.5,469.3 472.9,479.5 472.9,491.3" fill="#660f30"/>
<polygon points="436.6,471.3 446.2,482.2 446.2,501.3 436.6,503.3" fill="#8a1446"/><polygon points="436.6,503.3 446.2,501.3 454.6,511.5 454.6,523.3" fill="#660f30"/>
<polygon points="499.2,488.8 508.8,499.7 508.8,518.3 499.2,520.3" fill="#8a1446"/><polygon points="499.2,520.3 508.8,518.3 517.2,528.5 517.2,540.3" fill="#660f30"/>
<polygon points="475.6,516.1 485.2,527.0 485.2,544.8 475.6,546.8" fill="#8a1446"/><polygon points="475.6,546.8 485.2,544.8 493.6,555.0 493.6,566.8" fill="#660f30"/>
<polygon points="520.9,567.4 530.5,578.3 530.5,596.1 520.9,598.1" fill="#8a1446"/><polygon points="520.9,598.1 530.5,596.1 538.9,606.3 538.9,618.1" fill="#660f30"/>
<polygon points="450.2,579.0 459.8,589.9 459.8,607.7 450.2,609.7" fill="#8a1446"/><polygon points="450.2,609.7 459.8,607.7 468.2,617.9 468.2,629.7" fill="#660f30"/>
<polygon points="473.1,591.5 482.7,602.4 482.7,629.3 473.1,631.3" fill="#8a1446"/><polygon points="473.1,631.3 482.7,629.3 491.1,639.5 491.1,651.3" fill="#660f30"/>
<polygon points="435.8,606.4 445.4,617.3 445.4,643.4 435.8,645.4" fill="#8a1446"/><polygon points="435.8,645.4 445.4,643.4 453.8,653.6 453.8,665.4" fill="#660f30"/>
<polygon points="502.2,638.8 511.8,649.7 511.8,666.8 502.2,668.8" fill="#8a1446"/><polygon points="502.2,668.8 511.8,666.8 520.2,677.0 520.2,688.8" fill="#660f30"/>
<polygon points="467.3,641.3 476.9,652.2 476.9,701.3 467.3,703.3" fill="#8a1446"/><polygon points="467.3,703.3 476.9,701.3 485.3,711.5 485.3,723.3" fill="#660f30"/>
<polygon points="512.1,692.7 521.7,703.6 521.7,731.4 512.1,733.4" fill="#8a1446"/><polygon points="512.1,733.4 521.7,731.4 530.1,741.6 530.1,753.4" fill="#660f30"/>
</g>
<path d="M27.5 902.5 V878" stroke="#3838c8" stroke-width="1"/><text x="27.5" y="875" font-size="10" fill="#4040c0" font-family="Liberation Sans">z</text>
<path d="M27.5 902.5 H5" stroke="#307a40" stroke-width="1"/><text x="3" y="900" font-size="10" fill="#307a40" font-family="Liberation Sans">y</text>
<path d="M28.5 893.5 L34.5 899.5 M34.5 893.5 L28.5 899.5" stroke="#c03040" stroke-width="1"/>
<path d="M152.5 903 L152.5 883" stroke="#3838c8" stroke-width="1"/>
<path d="M152.5 903 L131 907.5" stroke="#307a40"/><path d="M152.5 903 L143.5 891" stroke="#c03030"/>
<text x="152" y="879" font-size="10" fill="#3838c8" font-family="Liberation Sans">z</text>
<text x="142" y="888" font-size="10" fill="#d02020" font-family="Liberation Sans">x</text>
<text x="130" y="905" font-size="10" fill="#307a40" font-family="Liberation Sans">y</text>
</svg>
<div class="t" style="left:131px;top:167px;font-size:12.5px;font-weight:bold;letter-spacing:1px;color:#e0aa22">User</div>

<div style="left:1098px;top:143px;width:28px;height:24px;background:#2e7431;border-top:1px solid #4a9a50;border-left:1px solid #4a9a50;border-right:1px solid #0a260b"></div>
<div style="left:1127px;top:143px;width:29px;height:24px;background:#2e7431;border-top:1px solid #4a9a50;border-left:1px solid #4a9a50;border-right:1px solid #0a260b"></div>
<div style="left:1156px;top:143px;width:29px;height:24px;background:#2e7431;border-top:1px solid #4a9a50;border-left:1px solid #4a9a50;border-right:1px solid #0a260b"></div>
<div style="left:1185px;top:143px;width:29px;height:24px;background:#2e7431;border-top:1px solid #4a9a50;border-left:1px solid #4a9a50;border-right:1px solid #0a260b"></div>
<div style="left:1214px;top:143px;width:29px;height:24px;background:#2e7431;border-top:1px solid #4a9a50;border-left:1px solid #4a9a50;border-right:1px solid #0a260b"></div>
<div style="left:1243px;top:143px;width:29px;height:24px;background:#2e7431;border-top:1px solid #4a9a50;border-left:1px solid #4a9a50;border-right:1px solid #0a260b"></div>
<svg style="left:1104px;top:146px" width="22" height="20" viewBox="0 0 22 20"><path d="M9 13 L19 19" stroke="#fff" stroke-width="2.2"/><path d="M9 13 L19 19" stroke="#222" stroke-width=".6" transform="translate(0,1.5)"/><path d="M6 1 L8 6 L13 4 L9 8 L12 12 L7 10 L5 15 L4 10 L0 11 L3 7 L0 3 L5 5 Z" fill="#fffff0"/></svg>
<svg style="left:1131px;top:146px" width="22" height="20" viewBox="0 0 22 20"><path d="M3 19 Q4 5 19 3" fill="none" stroke="#1a2050" stroke-width="6.5"/><path d="M3 19 Q4 5 19 3" fill="none" stroke="#9aa0e8" stroke-width="4.5"/><path d="M4.5 19 Q6 7 19 5" fill="none" stroke="#20206a" stroke-width="1.2"/><path d="M1.8 18 Q3 4 18 1.5" fill="none" stroke="#e0e4ff" stroke-width=".8"/><circle cx="20" cy="18" r="1" fill="#111"/></svg>
<svg style="left:1159px;top:146px" width="24" height="20" viewBox="0 0 24 20"><rect x="9" y="1" width="6" height="6" fill="#e8e8f0"/><path d="M12 7 L4 15 M12 7 L20 15 M12 7 V15" stroke="#1a2a1a" stroke-width="1"/><rect x="2" y="14" width="4" height="4" fill="#fff"/><rect x="10" y="14" width="4" height="4" fill="#fff"/><rect x="18" y="14" width="4" height="4" fill="#fff"/></svg>
<svg style="left:1190px;top:146px" width="22" height="20" viewBox="0 0 22 20"><circle cx="11" cy="10" r="8" fill="#111"/><circle cx="11" cy="10" r="6.5" fill="#2e7431" stroke="#ddd" stroke-width="1"/><path d="M7 10 H15 M11 6 V14" stroke="#c02020" stroke-width="1"/><path d="M2 6 Q0 10 2 14" stroke="#111" fill="none"/></svg>
<svg style="left:1219px;top:146px" width="22" height="20" viewBox="0 0 22 20"><rect x="1" y="1" width="20" height="14" fill="#222"/><rect x="2.5" y="2.5" width="17" height="11" fill="#f0f0f0"/><path d="M5 4 V12 H8 V4 Z" fill="#2030c0"/><path d="M12 12 L15 4 L18 12 Z" fill="#e01010"/><rect x="6" y="16" width="10" height="1" fill="#333"/></svg>
<svg style="left:1247px;top:146px" width="22" height="20" viewBox="0 0 22 20"><path d="M3 3 H18" stroke="#ccc" stroke-width="2.5"/><path d="M10 3 V19" stroke="#6a2010" stroke-width="3"/><path d="M7 2 H15 V6 H7 Z" fill="#e0e0e0"/></svg>
<div style="left:1105px;top:173px;width:145px;height:19px;background:#0a260b;"></div>
<div style="left:1107px;top:175px;width:143px;height:17px;background:#7b5410;"></div>
<div style="left:1255px;top:174px;width:16px;height:18px;background:#8a1040;"></div>
<div style="left:1105px;top:198px;width:167px;height:23px;background:#0a260b;"></div>
<div style="left:1107px;top:200px;width:147px;height:20px;background:#7b5410;"></div>
<div style="left:1254px;top:200px;width:16px;height:19px;background:linear-gradient(135deg,#fff 0%,#f2f2f2 55%,#bdbdbd 100%);"></div>
<svg style="left:1257px;top:207px" width="10" height="6" viewBox="0 0 10 6"><path d="M1 0 L9 0 L5 5 Z" fill="#000"/></svg>
<div class="t" style="left:1109px;top:204px;font-size:11px;color:#f0c840;transform:scaleX(.94)">Modifier List</div>
<div style="left:1105px;top:226px;width:165px;height:127px;background:#7b5410;border:2px solid #f0f0e0;border-top-color:#b8c0c8;border-left-color:#b8c0c8"></div>
<svg style="left:1114px;top:362px" width="14" height="12" viewBox="0 0 14 12"><path d="M0 6 H5" stroke="#ddd" stroke-width="1.5"/><rect x="5" y="2" width="3" height="8" fill="#ccc"/><rect x="8" y="1" width="5" height="10" fill="none" stroke="#ddd" stroke-width="1"/></svg>
<div style="left:1138px;top:360px;width:1px;height:12px;background:#0a260b;"></div>
<div style="left:1144px;top:357px;width:24px;height:23px;background:transparent;border:1px solid #1e5a20"></div>
<svg style="left:1151px;top:361px" width="10" height="15" viewBox="0 0 10 15"><path d="M2 14 V4 Q2 1 4 1 M7 14 V4 Q7 1 9 1" stroke="#fff" stroke-width="1.5" fill="none"/></svg>
<div style="left:1174px;top:360px;width:1px;height:12px;background:#0a260b;"></div>
<svg style="left:1185px;top:362px" width="15" height="13" viewBox="0 0 15 13"><path d="M1 1 L7 12 L14 1 M3 6 H9" stroke="#fff" stroke-width="1" fill="none" stroke-dasharray="1.5 1"/></svg>
<svg style="left:1210px;top:361px" width="12" height="15" viewBox="0 0 12 15"><ellipse cx="6" cy="9" rx="4.5" ry="5" fill="none" stroke="#fff" stroke-width="1"/><path d="M3 3 Q6 0 9 3" stroke="#fff" fill="none"/></svg>
<div style="left:1234px;top:360px;width:1px;height:12px;background:#0a260b;"></div>
<svg style="left:1243px;top:362px" width="18" height="14" viewBox="0 0 18 14"><rect x="1" y="1" width="14" height="12" fill="#fff" stroke="#1a2080" stroke-width="1.2"/><rect x="1" y="1" width="14" height="3" fill="#1a2080"/><path d="M5 7 H13 M5 10 H13 M8 5 V12" stroke="#334" stroke-width="1"/></svg>
<div style="left:1102px;top:392px;width:173px;height:2px;background:#0a260b;"></div>
<div style="left:1100px;top:401px;width:175px;height:567px;background:transparent;border-left:1px solid #0a260b;border-top:1px solid #0a260b;border-right:1px solid #4a9a50;border-bottom:1px solid #4a9a50"></div>
<div style="left:1096px;top:973px;width:184px;height:2px;background:#0a260b;"></div>

<div style="left:0px;top:927px;width:121px;height:2px;background:#0a260b;"></div>
<div style="left:0px;top:929px;width:15px;height:16px;background:#2e7431;border-top:1px solid #4a9a50;border-left:1px solid #4a9a50"></div>
<div style="left:15px;top:929px;width:1px;height:17px;background:#0a260b;"></div>
<div style="left:16px;top:929px;width:124px;height:15px;background:#2e7431;border-top:1px solid #4a9a50;border-left:1px solid #4a9a50"></div>
<div style="left:139px;top:929px;width:2px;height:17px;background:#0a260b;"></div>
<div style="left:16px;top:944px;width:125px;height:2px;background:#0a260b;"></div>
<div style="left:141px;top:929px;width:15px;height:16px;background:#2e7431;border-top:1px solid #4a9a50;border-left:1px solid #4a9a50"></div>
<div style="left:156px;top:929px;width:1px;height:17px;background:#0a260b;"></div>
<div style="left:157px;top:929px;width:939px;height:17px;background:#4b3408;"></div>
<svg style="left:4px;top:932px" width="8" height="11" viewBox="0 0 8 11"><path d="M6 1 L1.5 5.5 L6 10" stroke="#b8f0a8" stroke-width="1.2" fill="none"/></svg>
<svg style="left:145px;top:932px" width="8" height="11" viewBox="0 0 8 11"><path d="M2 1 L6.5 5.5 L2 10" stroke="#b8f0a8" stroke-width="1.2" fill="none"/></svg>
<div class="t" style="left:61.5px;top:932px;font-size:12px;color:#d4f090;transform:scaleX(.96)">0 / 100</div>
<div style="left:0px;top:946px;width:1096px;height:1px;background:#5a6a3a;"></div>
<div style="left:0px;top:947px;width:1096px;height:2px;background:#0a260b;"></div>
<div style="left:0px;top:949px;width:1096px;height:24px;background:#8a9a6c;"></div>
<svg style="left:0;top:0" width="1096" height="1024"><line x1="16.5" y1="948" x2="16.5" y2="959.5" stroke="#dde8c8" stroke-width="1"/><line x1="27.5" y1="948" x2="27.5" y2="959.5" stroke="#dde8c8" stroke-width="1"/><line x1="38.5" y1="948" x2="38.5" y2="959.5" stroke="#dde8c8" stroke-width="1"/><line x1="49.5" y1="948" x2="49.5" y2="959.5" stroke="#dde8c8" stroke-width="1"/><line x1="60.5" y1="948" x2="60.5" y2="959.5" stroke="#dde8c8" stroke-width="1"/><line x1="70.5" y1="948" x2="70.5" y2="959.5" stroke="#dde8c8" stroke-width="1"/><line x1="81.5" y1="948" x2="81.5" y2="959.5" stroke="#dde8c8" stroke-width="1"/><line x1="92.5" y1="948" x2="92.5" y2="959.5" stroke="#dde8c8" stroke-width="1"/><line x1="103.5" y1="948" x2="103.5" y2="959.5" stroke="#dde8c8" stroke-width="1"/><line x1="114.5" y1="948" x2="114.5" y2="959.5" stroke="#dde8c8" stroke-width="1"/><line x1="125.5" y1="948" x2="125.5" y2="959.5" stroke="#dde8c8" stroke-width="1"/><line x1="136.5" y1="948" x2="136.5" y2="959.5" stroke="#dde8c8" stroke-width="1"/><line x1="146.5" y1="948" x2="146.5" y2="959.5" stroke="#dde8c8" stroke-width="1"/><line x1="157.5" y1="948" x2="157.5" y2="959.5" stroke="#dde8c8" stroke-width="1"/><line x1="168.5" y1="948" x2="168.5" y2="959.5" stroke="#dde8c8" stroke-width="1"/><line x1="179.5" y1="948" x2="179.5" y2="959.5" stroke="#dde8c8" stroke-width="1"/><line x1="190.5" y1="948" x2="190.5" y2="959.5" stroke="#dde8c8" stroke-width="1"/><line x1="201.5" y1="948" x2="201.5" y2="959.5" stroke="#dde8c8" stroke-width="1"/><line x1="212.5" y1="948" x2="212.5" y2="959.5" stroke="#dde8c8" stroke-width="1"/><line x1="222.5" y1="948" x2="222.5" y2="959.5" stroke="#dde8c8" stroke-width="1"/><line x1="233.5" y1="948" x2="233.5" y2="959.5" stroke="#dde8c8" stroke-width="1"/><line x1="244.5" y1="948" x2="244.5" y2="959.5" stroke="#dde8c8" stroke-width="1"/><line x1="255.5" y1="948" x2="255.5" y2="959.5" stroke="#dde8c8" stroke-width="1"/><line x1="266.5" y1="948" x2="266.5" y2="959.5" stroke="#dde8c8" stroke-width="1"/><line x1="277.5" y1="948" x2="277.5" y2="959.5" stroke="#dde8c8" stroke-width="1"/><line x1="288.5" y1="948" x2="288.5" y2="959.5" stroke="#dde8c8" stroke-width="1"/><line x1="298.5" y1="948" x2="298.5" y2="959.5" stroke="#dde8c8" stroke-width="1"/><line x1="309.5" y1="948" x2="309.5" y2="959.5" stroke="#dde8c8" stroke-width="1"/><line x1="320.5" y1="948" x2="320.5" y2="959.5" stroke="#dde8c8" stroke-width="1"/><line x1="331.5" y1="948" x2="331.5" y2="959.5" stroke="#dde8c8" stroke-width="1"/><line x1="342.5" y1="948" x2="342.5" y2="959.5" stroke="#dde8c8" stroke-width="1"/><line x1="353.5" y1="948" x2="353.5" y2="959.5" stroke="#dde8c8" stroke-width="1"/><line x1="364.5" y1="948" x2="364.5" y2="959.5" stroke="#dde8c8" stroke-width="1"/><line x1="374.5" y1="948" x2="374.5" y2="959.5" stroke="#dde8c8" stroke-width="1"/><line x1="385.5" y1="948" x2="385.5" y2="959.5" stroke="#dde8c8" stroke-width="1"/><line x1="396.5" y1="948" x2="396.5" y2="959.5" stroke="#dde8c8" stroke-width="1"/><line x1="407.5" y1="948" x2="407.5" y2="959.5" stroke="#dde8c8" stroke-width="1"/><line x1="418.5" y1="948" x2="418.5" y2="959.5" stroke="#dde8c8" stroke-width="1"/><line x1="429.5" y1="948" x2="429.5" y2="959.5" stroke="#dde8c8" stroke-width="1"/><line x1="440.5" y1="948" x2="440.5" y2="959.5" stroke="#dde8c8" stroke-width="1"/><line x1="450.5" y1="948" x2="450.5" y2="959.5" stroke="#dde8c8" stroke-width="1"/><line x1="461.5" y1="948" x2="461.5" y2="959.5" stroke="#dde8c8" stroke-width="1"/><line x1="472.5" y1="948" x2="472.5" y2="959.5" stroke="#dde8c8" stroke-width="1"/><line x1="483.5" y1="948" x2="483.5" y2="959.5" stroke="#dde8c8" stroke-width="1"/><line x1="494.5" y1="948" x2="494.5" y2="959.5" stroke="#dde8c8" stroke-width="1"/><line x1="505.5" y1="948" x2="505.5" y2="959.5" stroke="#dde8c8" stroke-width="1"/><line x1="516.5" y1="948" x2="516.5" y2="959.5" stroke="#dde8c8" stroke-width="1"/><line x1="526.5" y1="948" x2="526.5" y2="959.5" stroke="#dde8c8" stroke-width="1"/><line x1="537.5" y1="948" x2="537.5" y2="959.5" stroke="#dde8c8" stroke-width="1"/><line x1="548.5" y1="948" x2="548.5" y2="959.5" stroke="#dde8c8" stroke-width="1"/><line x1="559.5" y1="948" x2="559.5" y2="959.5" stroke="#dde8c8" stroke-width="1"/><line x1="570.5" y1="948" x2="570.5" y2="959.5" stroke="#dde8c8" stroke-width="1"/><line x1="581.5" y1="948" x2="581.5" y2="959.5" stroke="#dde8c8" stroke-width="1"/><line x1="592.5" y1="948" x2="592.5" y2="959.5" stroke="#dde8c8" stroke-width="1"/><line x1="602.5" y1="948" x2="602.5" y2="959.5" stroke="#dde8c8" stroke-width="1"/><line x1="613.5" y1="948" x2="613.5" y2="959.5" stroke="#dde8c8" stroke-width="1"/><line x1="624.5" y1="948" x2="624.5" y2="959.5" stroke="#dde8c8" stroke-width="1"/><line x1="635.5" y1="948" x2="635.5" y2="959.5" stroke="#dde8c8" stroke-width="1"/><line x1="646.5" y1="948" x2="646.5" y2="959.5" stroke="#dde8c8" stroke-width="1"/><line x1="657.5" y1="948" x2="657.5" y2="959.5" stroke="#dde8c8" stroke-width="1"/><line x1="668.5" y1="948" x2="668.5" y2="959.5" stroke="#dde8c8" stroke-width="1"/><line x1="678.5" y1="948" x2="678.5" y2="959.5" stroke="#dde8c8" stroke-width="1"/><line x1="689.5" y1="948" x2="689.5" y2="959.5" stroke="#dde8c8" stroke-width="1"/><line x1="700.5" y1="948" x2="700.5" y2="959.5" stroke="#dde8c8" stroke-width="1"/><line x1="711.5" y1="948" x2="711.5" y2="959.5" stroke="#dde8c8" stroke-width="1"/><line x1="722.5" y1="948" x2="722.5" y2="959.5" stroke="#dde8c8" stroke-width="1"/><line x1="733.5" y1="948" x2="733.5" y2="959.5" stroke="#dde8c8" stroke-width="1"/><line x1="744.5" y1="948" x2="744.5" y2="959.5" stroke="#dde8c8" stroke-width="1"/><line x1="754.5" y1="948" x2="754.5" y2="959.5" stroke="#dde8c8" stroke-width="1"/><line x1="765.5" y1="948" x2="765.5" y2="959.5" stroke="#dde8c8" stroke-width="1"/><line x1="776.5" y1="948" x2="776.5" y2="959.5" stroke="#dde8c8" stroke-width="1"/><line x1="787.5" y1="948" x2="787.5" y2="959.5" stroke="#dde8c8" stroke-width="1"/><line x1="798.5" y1="948" x2="798.5" y2="959.5" stroke="#dde8c8" stroke-width="1"/><line x1="809.5" y1="948" x2="809.5" y2="959.5" stroke="#dde8c8" stroke-width="1"/><line x1="820.5" y1="948" x2="820.5" y2="959.5" stroke="#dde8c8" stroke-width="1"/><line x1="830.5" y1="948" x2="830.5" y2="959.5" stroke="#dde8c8" stroke-width="1"/><line x1="841.5" y1="948" x2="841.5" y2="959.5" stroke="#dde8c8" stroke-width="1"/><line x1="852.5" y1="948" x2="852.5" y2="959.5" stroke="#dde8c8" stroke-width="1"/><line x1="863.5" y1="948" x2="863.5" y2="959.5" stroke="#dde8c8" stroke-width="1"/><line x1="874.5" y1="948" x2="874.5" y2="959.5" stroke="#dde8c8" stroke-width="1"/><line x1="885.5" y1="948" x2="885.5" y2="959.5" stroke="#dde8c8" stroke-width="1"/><line x1="896.5" y1="948" x2="896.5" y2="959.5" stroke="#dde8c8" stroke-width="1"/><line x1="906.5" y1="948" x2="906.5" y2="959.5" stroke="#dde8c8" stroke-width="1"/><line x1="917.5" y1="948" x2="917.5" y2="959.5" stroke="#dde8c8" stroke-width="1"/><line x1="928.5" y1="948" x2="928.5" y2="959.5" stroke="#dde8c8" stroke-width="1"/><line x1="939.5" y1="948" x2="939.5" y2="959.5" stroke="#dde8c8" stroke-width="1"/><line x1="950.5" y1="948" x2="950.5" y2="959.5" stroke="#dde8c8" stroke-width="1"/><line x1="961.5" y1="948" x2="961.5" y2="959.5" stroke="#dde8c8" stroke-width="1"/><line x1="972.5" y1="948" x2="972.5" y2="959.5" stroke="#dde8c8" stroke-width="1"/><line x1="982.5" y1="948" x2="982.5" y2="959.5" stroke="#dde8c8" stroke-width="1"/><line x1="993.5" y1="948" x2="993.5" y2="959.5" stroke="#dde8c8" stroke-width="1"/><line x1="1004.5" y1="948" x2="1004.5" y2="959.5" stroke="#dde8c8" stroke-width="1"/><line x1="1015.5" y1="948" x2="1015.5" y2="959.5" stroke="#dde8c8" stroke-width="1"/><line x1="1026.5" y1="948" x2="1026.5" y2="959.5" stroke="#dde8c8" stroke-width="1"/><line x1="1037.5" y1="948" x2="1037.5" y2="959.5" stroke="#dde8c8" stroke-width="1"/><line x1="1048.5" y1="948" x2="1048.5" y2="959.5" stroke="#dde8c8" stroke-width="1"/><line x1="1058.5" y1="948" x2="1058.5" y2="959.5" stroke="#dde8c8" stroke-width="1"/><line x1="1069.5" y1="948" x2="1069.5" y2="959.5" stroke="#dde8c8" stroke-width="1"/><line x1="1080.5" y1="948" x2="1080.5" y2="959.5" stroke="#dde8c8" stroke-width="1"/><line x1="1091.5" y1="948" x2="1091.5" y2="959.5" stroke="#dde8c8" stroke-width="1"/></svg>
<div style="left:1.5px;top:949px;width:8px;height:24px;background:#d8d8a0;border:1px solid #606040"></div>
<div style="left:5px;top:950px;width:1px;height:22px;background:#a0a070;"></div>
<div style="left:0;top:949px;width:1096px;height:24px;overflow:hidden">
<div class="t" style="left:56.584999999999994px;top:12px;font-size:11.5px;color:#2a3020;letter-spacing:-.2px">5</div>
<div class="t" style="left:107.86999999999999px;top:12px;font-size:11.5px;color:#2a3020;letter-spacing:-.2px">10</div>
<div class="t" style="left:162.155px;top:12px;font-size:11.5px;color:#2a3020;letter-spacing:-.2px">15</div>
<div class="t" style="left:216.44px;top:12px;font-size:11.5px;color:#2a3020;letter-spacing:-.2px">20</div>
<div class="t" style="left:270.72499999999997px;top:12px;font-size:11.5px;color:#2a3020;letter-spacing:-.2px">25</div>
<div class="t" style="left:325.01px;top:12px;font-size:11.5px;color:#2a3020;letter-spacing:-.2px">30</div>
<div class="t" style="left:379.295px;top:12px;font-size:11.5px;color:#2a3020;letter-spacing:-.2px">35</div>
<div class="t" style="left:433.58px;top:12px;font-size:11.5px;color:#2a3020;letter-spacing:-.2px">40</div>
<div class="t" style="left:487.86499999999995px;top:12px;font-size:11.5px;color:#2a3020;letter-spacing:-.2px">45</div>
<div class="t" style="left:542.1499999999999px;top:12px;font-size:11.5px;color:#2a3020;letter-spacing:-.2px">50</div>
<div class="t" style="left:596.435px;top:12px;font-size:11.5px;color:#2a3020;letter-spacing:-.2px">55</div>
<div class="t" style="left:650.7199999999999px;top:12px;font-size:11.5px;color:#2a3020;letter-spacing:-.2px">60</div>
<div class="t" style="left:705.0049999999999px;top:12px;font-size:11.5px;color:#2a3020;letter-spacing:-.2px">65</div>
<div class="t" style="left:759.29px;top:12px;font-size:11.5px;color:#2a3020;letter-spacing:-.2px">70</div>
<div class="t" style="left:813.5749999999999px;top:12px;font-size:11.5px;color:#2a3020;letter-spacing:-.2px">75</div>
<div class="t" style="left:867.8599999999999px;top:12px;font-size:11.5px;color:#2a3020;letter-spacing:-.2px">80</div>
<div class="t" style="left:922.1449999999999px;top:12px;font-size:11.5px;color:#2a3020;letter-spacing:-.2px">85</div>
<div class="t" style="left:976.4299999999998px;top:12px;font-size:11.5px;color:#2a3020;letter-spacing:-.2px">90</div>
<div class="t" style="left:1030.715px;top:12px;font-size:11.5px;color:#2a3020;letter-spacing:-.2px">95</div>
<div class="t" style="left:1081.9999999999998px;top:12px;font-size:11.5px;color:#2a3020;letter-spacing:-.2px">100</div>
</div>
<div style="left:1096px;top:929px;width:1px;height:45px;background:#0a260b;"></div>
<div style="left:0px;top:973px;width:1096px;height:3px;background:#2e7431;"></div>
<div style="left:2px;top:977px;width:297px;height:21px;background:#dcc4c8;border-top:1px solid #c0b0b8"></div>
<div style="left:2px;top:997px;width:297px;height:3px;background:#f8f8f8;"></div>
<div style="left:2px;top:999px;width:297px;height:1px;background:#777;"></div>
<div style="left:2px;top:1000px;width:297px;height:22px;background:#fdfdfd;"></div>
<div style="left:298px;top:977px;width:1px;height:45px;background:#f0f0f0;"></div>
<div style="left:304px;top:975px;width:1px;height:49px;background:#0a260b;"></div>
<div style="left:307px;top:978px;width:296px;height:21px;background:transparent;border-top:1px solid #0a260b;border-left:1px solid #0a260b;border-bottom:1px solid #4a9a50;border-right:1px solid #4a9a50"></div>
<div class="t" style="left:313px;top:983px;font-size:11px;color:#dff0a0;">None Selected</div>
<div style="left:307px;top:1003px;width:407px;height:21px;background:transparent;border-top:1px solid #0a260b;border-left:1px solid #0a260b;border-right:1px solid #4a9a50"></div>
<div class="t" style="left:313px;top:1008px;font-size:11px;color:#dff0a0;transform:scaleX(.975)">Click and drag to select and move objects</div>
<div style="left:716px;top:1003px;width:99px;height:21px;background:transparent;border-top:1px solid #0a260b;border-left:1px solid #0a260b;border-right:1px solid #4a9a50"></div>
<div class="t" style="left:722px;top:1008px;font-size:11px;color:#dff0a0;">Add Time Tag</div>
<div style="left:0px;top:1022px;width:1280px;height:1px;background:#10200f;"></div>
<div style="left:0px;top:1023px;width:1280px;height:1px;background:#8a8aa0;"></div>
<svg style="left:610px;top:981px" width="12" height="13" viewBox="0 0 12 13"><path d="M3 6 V4 Q6 0 9 4 V6" stroke="#fff" stroke-width="1.5" fill="none"/><rect x="1.5" y="6" width="9" height="6" fill="#e8e8e8"/><path d="M2 8 H10 M2 10 H10" stroke="#333" stroke-width=".8"/></svg>
<div style="left:636px;top:980px;width:15px;height:15px;background:transparent;border:1px solid #0a1a0a"></div>
<svg style="left:639px;top:983px" width="9" height="9" viewBox="0 0 9 9"><circle cx="4.5" cy="4.5" r="2" fill="none" stroke="#ddd" stroke-width="1"/><path d="M4.5 0 V2 M4.5 7 V9" stroke="#333"/></svg>
<div class="t" style="left:659px;top:983px;font-size:12px;color:#dff0a0;">X:</div>
<div style="left:669px;top:979px;width:56px;height:19px;background:#0a260b;"></div>
<div style="left:671px;top:981px;width:54px;height:17px;background:#7b5410;"></div>
<div class="t" style="left:673px;top:983px;font-size:12px;color:#3a2a08;transform:scaleX(.93)">16.688</div>
<div class="t" style="left:740px;top:983px;font-size:12px;color:#dff0a0;">Y:</div>
<div style="left:751px;top:979px;width:57px;height:19px;background:#0a260b;"></div>
<div style="left:753px;top:981px;width:55px;height:17px;background:#7b5410;"></div>
<div class="t" style="left:755px;top:983px;font-size:12px;color:#3a2a08;transform:scaleX(.9)">-36.937</div>
<div class="t" style="left:822px;top:983px;font-size:12px;color:#dff0a0;">Z:</div>
<div style="left:833px;top:979px;width:57px;height:19px;background:#0a260b;"></div>
<div style="left:835px;top:981px;width:55px;height:17px;background:#7b5410;"></div>
<div class="t" style="left:837px;top:983px;font-size:12px;color:#3a2a08;">0.0</div>
<div style="left:905px;top:978px;width:99px;height:21px;background:transparent;border-top:1px solid #0a260b;border-left:1px solid #0a260b;border-bottom:1px solid #4a9a50;border-right:1px solid #4a9a50"></div>
<div class="t" style="left:911px;top:983px;font-size:11px;color:#dff0a0;transform:scaleX(.95)">Grid = 10.0</div>
<div style="left:1009px;top:976px;width:47px;height:45px;background:#2e7431;border-top:1px solid #4a9a50;border-left:1px solid #4a9a50;border-right:2px solid #0a260b;border-bottom:2px solid #0a260b"></div>
<div class="t" style="left:1014px;top:994px;font-size:11px;color:#dff0a0;transform:scaleX(.9)">Animate</div>
<div style="left:820px;top:1002px;width:22px;height:21px;background:#9a9a78;border:1px solid #0a260b"></div>
<svg style="left:823px;top:1004px" width="16" height="16" viewBox="0 0 16 16"><path d="M2 6 L8 3 L14 6 L14 11 L8 14 L2 11 Z" fill="#f0f0f0" stroke="#333" stroke-width=".6"/><path d="M2 6 L8 9 L14 6 M8 9 V14" stroke="#999" stroke-width=".6" fill="none"/></svg>
<svg style="left:851px;top:1003px" width="18" height="18" viewBox="0 0 18 18"><rect x="1" y="2" width="9" height="14" fill="none" stroke="#000" stroke-width="1.5" stroke-dasharray="1.5 1.5"/><circle cx="10" cy="9" r="4" fill="#e8e8e8"/><path d="M12 11 L16 15" stroke="#333" stroke-width="1.4"/></svg>
<div style="left:878px;top:1002px;width:22px;height:21px;background:#9a9a78;border:1px solid #0a260b"></div>
<svg style="left:881px;top:1004px" width="16" height="16" viewBox="0 0 16 16"><path d="M2 6 L8 3 L14 6 L14 11 L8 14 L2 11 Z" fill="#bbb" stroke="#222" stroke-width=".7"/><path d="M8 9 L14 6 L14 11 L8 14 Z" fill="#777"/></svg>
<div style="left:904px;top:1002px;width:1px;height:20px;background:#0a260b;"></div>
<svg style="left:910px;top:1004px" width="22" height="18" viewBox="0 0 22 18"><path d="M4 14 L2.5 11 Q1 7 4 6 Q7 5 9 8.5 L10 11" stroke="#2a0505" stroke-width="4.2" fill="none"/><path d="M4 14 L2.5 11 Q1 7 4 6 Q7 5 9 8.5 L10 11" stroke="#8a2a14" stroke-width="2.8" fill="none"/><path d="M3.5 13 L5 15 M9 10.5 L11 11.5" stroke="#fff" stroke-width="2"/><text x="10" y="8" font-size="9" fill="#000" font-family="Liberation Sans">3</text></svg>
<svg style="left:932px;top:1004px" width="22" height="18" viewBox="0 0 22 18"><path d="M4 14 L2.5 11 Q1 7 4 6 Q7 5 9 8.5 L10 11" stroke="#2a0505" stroke-width="4.2" fill="none"/><path d="M4 14 L2.5 11 Q1 7 4 6 Q7 5 9 8.5 L10 11" stroke="#8a2a14" stroke-width="2.8" fill="none"/><path d="M3.5 13 L5 15 M9 10.5 L11 11.5" stroke="#fff" stroke-width="2"/><path d="M9 13 H18 M10 13 L15 2 M13 5 L17 8 M16 9 L16 13" stroke="#000" stroke-width="1.2" fill="none"/></svg>
<svg style="left:956px;top:1004px" width="22" height="18" viewBox="0 0 22 18"><path d="M4 14 L2.5 11 Q1 7 4 6 Q7 5 9 8.5 L10 11" stroke="#2a0505" stroke-width="4.2" fill="none"/><path d="M4 14 L2.5 11 Q1 7 4 6 Q7 5 9 8.5 L10 11" stroke="#8a2a14" stroke-width="2.8" fill="none"/><path d="M3.5 13 L5 15 M9 10.5 L11 11.5" stroke="#fff" stroke-width="2"/><text x="9" y="9" font-size="10" fill="#000" font-family="Liberation Sans">%</text></svg>
<div style="left:979px;top:1002px;width:1px;height:20px;background:#0a260b;"></div>
<svg style="left:985px;top:1004px" width="22" height="18" viewBox="0 0 22 18"><path d="M4 14 L2.5 11 Q1 7 4 6 Q7 5 9 8.5 L10 11" stroke="#2a0505" stroke-width="4.2" fill="none"/><path d="M4 14 L2.5 11 Q1 7 4 6 Q7 5 9 8.5 L10 11" stroke="#8a2a14" stroke-width="2.8" fill="none"/><path d="M3.5 13 L5 15 M9 10.5 L11 11.5" stroke="#fff" stroke-width="2"/><rect x="9" y="0" width="7" height="13" fill="none" stroke="#ccc" stroke-width="1"/><path d="M10 6.5 H15 M11 4 L12.5 2 L14 4 M11 9 L12.5 11 L14 9" stroke="#111" stroke-width="1" fill="none"/></svg>
<svg style="left:1062px;top:983px" width="18" height="14" viewBox="0 0 18 14"><path d="M1 1 V12 M3 6.5 L8 1 V12 Z M9 6.5 L14 1 V12 Z" fill="#6a706a" stroke="#111" stroke-width="1"/></svg>
<div style="left:1085px;top:981px;width:1px;height:17px;background:#0a260b;"></div>
<svg style="left:1091px;top:983px" width="18" height="14" viewBox="0 0 18 14"><path d="M6 6.5 L10 1 V12 Z" fill="#6a706a" stroke="#111"/><path d="M2 1 V12 M12 1 V12" stroke="#111" stroke-width="1.5"/></svg>
<div style="left:1113px;top:983px;width:15px;height:15px;background:transparent;border:1px solid #111"></div>
<svg style="left:1117px;top:986px" width="9" height="11" viewBox="0 0 9 11"><path d="M1 1 L7 5 L1 9 Z" fill="#6a706a" stroke="#111"/></svg>
<div style="left:1127px;top:998px;width:5px;height:2px;background:#fff;transform:rotate(-45deg)"></div>
<svg style="left:1137px;top:983px" width="18" height="14" viewBox="0 0 18 14"><path d="M2 1 V12" stroke="#111" stroke-width="1.5"/><path d="M5 1 L11 6.5 L5 12 Z" fill="#6a706a" stroke="#111"/></svg>
<div style="left:1157px;top:981px;width:1px;height:17px;background:#0a260b;"></div>
<svg style="left:1161px;top:983px" width="18" height="14" viewBox="0 0 18 14"><path d="M1 1 L6 6.5 L1 12 Z M7 1 L12 6.5 L7 12 Z" fill="#6a706a" stroke="#111"/><path d="M14 1 V12" stroke="#111" stroke-width="1"/></svg>
<div style="left:1183px;top:981px;width:1px;height:40px;background:#0a260b;"></div>
<svg style="left:1063px;top:1002px" width="18" height="14" viewBox="0 0 18 14"><circle cx="4" cy="7" r="3" fill="none" stroke="#111" stroke-width="2"/><path d="M7 7 H16 M12 7 V10 M15 7 V10" stroke="#111" stroke-width="1.6"/></svg>
<div style="left:1085px;top:1001px;width:1px;height:19px;background:#0a260b;"></div>
<div style="left:1086px;top:1000px;width:67px;height:19px;background:#0a260b;"></div>
<div style="left:1088px;top:1002px;width:64px;height:17px;background:#7b5410;"></div>
<div class="t" style="left:1090px;top:1004px;font-size:12px;color:#f0c840;">0</div>
<div style="left:1157px;top:1001px;width:1px;height:19px;background:#0a260b;"></div>
<svg style="left:1162px;top:1001px" width="16" height="18" viewBox="0 0 16 18"><rect x="1" y="1" width="10" height="12" fill="#1a2a1a"/><rect x="2" y="4" width="8" height="8" fill="#2e7431"/><circle cx="10" cy="12" r="5" fill="#fff" stroke="#a02020" stroke-width="1"/><path d="M10 9 V13 H12" stroke="#c02020" stroke-width="1"/></svg>
<svg style="left:1187px;top:982px" width="16" height="16" viewBox="0 0 16 16"><circle cx="6" cy="6" r="5" fill="#f0f0f8" stroke="#2a3aa0" stroke-width="1.4"/><path d="M9.5 9.5 L14 14" stroke="#1a2a80" stroke-width="2.4"/></svg>
<svg style="left:1209px;top:982px" width="20" height="16" viewBox="0 0 20 16"><rect x="7" y="1" width="12" height="11" fill="#f0c0c0" stroke="#b03030" stroke-width="1"/><path d="M13 1 V12 M7 6.5 H19" stroke="#b03030"/><circle cx="6" cy="10" r="4" fill="#f0f0f8" stroke="#2a3aa0" stroke-width="1.2"/></svg>
<svg style="left:1233px;top:981px" width="18" height="17" viewBox="0 0 18 17"><path d="M1 4 V1 H4 M14 1 H17 V4 M17 13 V16 H14 M4 16 H1 V13" stroke="#111" fill="none"/><path d="M4 6 L7 3 L14 3 L14 10 L11 13 L4 13 Z" fill="#c0c4e8" stroke="#1a2a80" stroke-width="1"/></svg>
<div style="left:1242px;top:995px;width:5px;height:2px;background:#fff;transform:rotate(-45deg)"></div>
<svg style="left:1256px;top:981px" width="20" height="17" viewBox="0 0 20 17"><rect x="7" y="1" width="12" height="11" fill="#f0c0c0" stroke="#b03030" stroke-width="1"/><path d="M13 1 V12 M7 6.5 H19" stroke="#b03030"/><path d="M1 8 L4 5 L10 5 L10 13 L7 16 L1 16 Z" fill="#c0c4e8" stroke="#1a2a80" stroke-width="1"/></svg>
<div style="left:1265px;top:995px;width:5px;height:2px;background:#fff;transform:rotate(-45deg)"></div>
<svg style="left:1187px;top:1002px" width="17" height="17" viewBox="0 0 17 17"><rect x="0" y="0" width="17" height="17" fill="#d8e8d0" opacity=".7"/><circle cx="7" cy="7" r="5" fill="#f0f0f8" stroke="#2a3aa0" stroke-width="1.4"/><path d="M10.5 10.5 L15 15" stroke="#1a2a80" stroke-width="2.4"/></svg>
<svg style="left:1210px;top:1001px" width="17" height="18" viewBox="0 0 17 18"><path d="M3 10 V5 Q4 3 5 5 V9 V3 Q6 1 7 3 V9 V2 Q8 0 9 2 V9 V3 Q10 1 11 3 V10 L13 8 Q15 8 14 10 L10 16 H5 Z" fill="#f8f8f8" stroke="#333" stroke-width=".7"/></svg>
<svg style="left:1233px;top:1001px" width="18" height="18" viewBox="0 0 18 18"><circle cx="9" cy="10" r="5.5" fill="#c0b8e0" stroke="#333" stroke-width=".8"/><path d="M9 1 V10 L16 12 M9 10 L3 15" stroke="#111" stroke-width="1" fill="none"/><path d="M7 3 L9 0 L11 3 M14 10 L17 12 L14 14" stroke="#111" fill="none"/></svg>
<div style="left:1242px;top:1016px;width:5px;height:2px;background:#fff;transform:rotate(-45deg)"></div>
<svg style="left:1256px;top:1001px" width="18" height="18" viewBox="0 0 18 18"><rect x="1" y="1" width="10" height="10" fill="none" stroke="#1a3a50" stroke-width="1.3"/><rect x="7" y="7" width="10" height="10" fill="none" stroke="#1a3a50" stroke-width="1.3"/><path d="M3 3 L9 9" stroke="#1a3a50"/></svg>
</body></html>
